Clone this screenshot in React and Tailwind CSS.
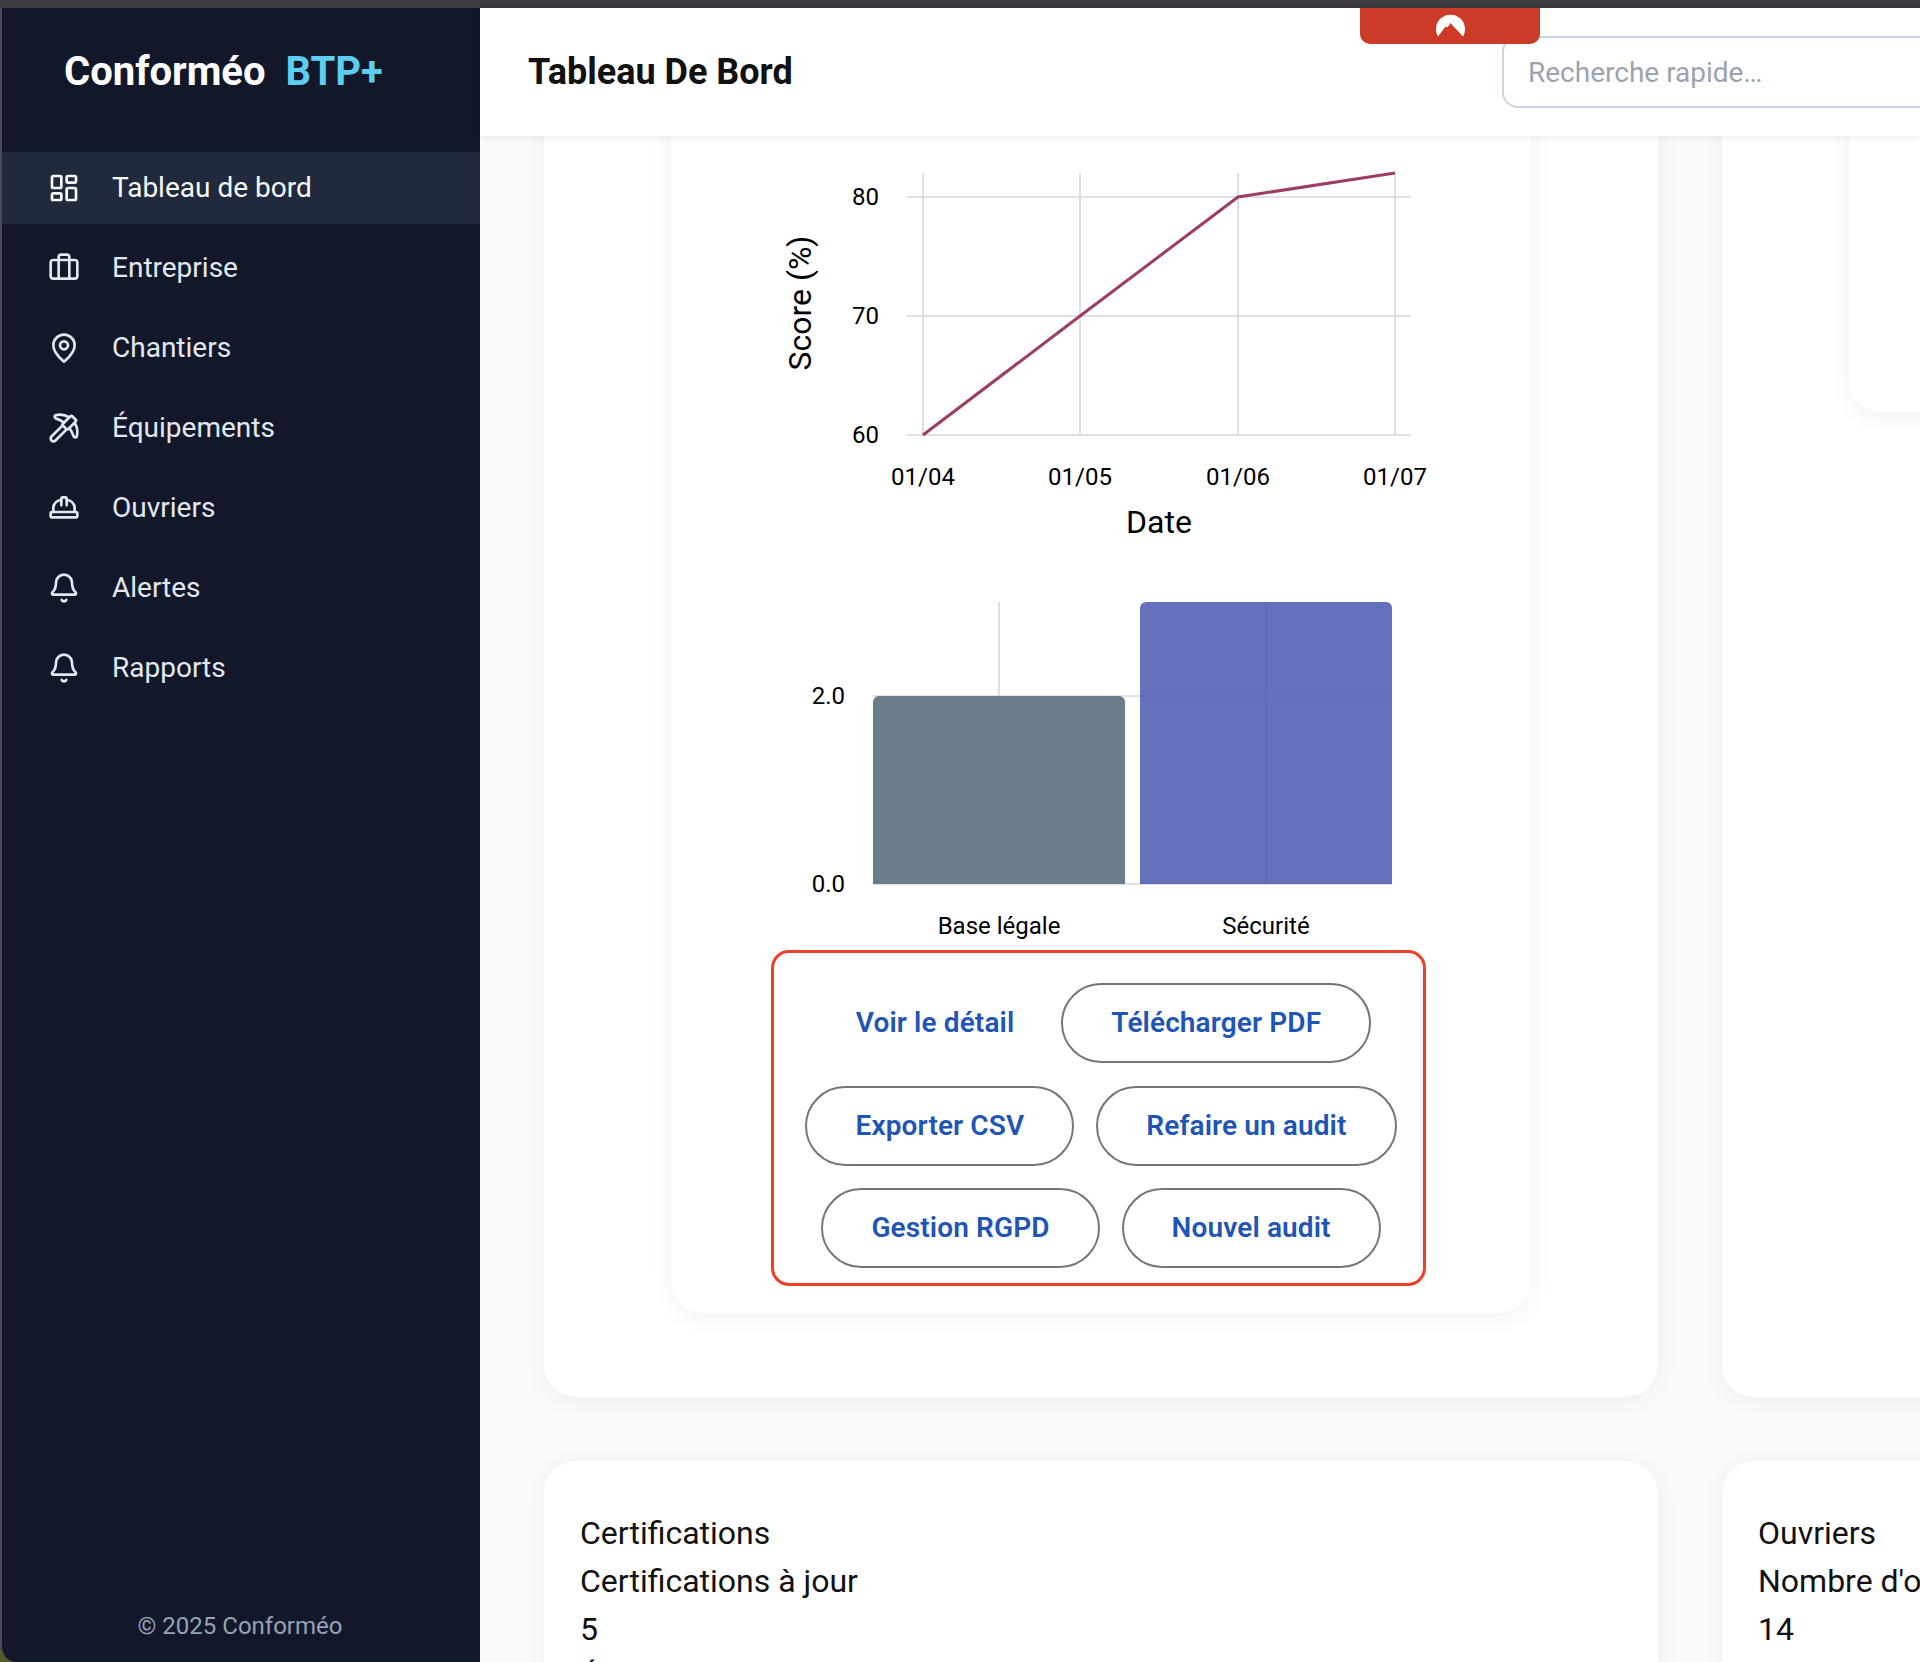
import React from "react";
import { LayoutDashboard, Briefcase, MapPin, Pickaxe, HardHat, Bell } from "lucide-react";

const nav = [
  { label: "Tableau de bord", Icon: LayoutDashboard, active: true },
  { label: "Entreprise", Icon: Briefcase },
  { label: "Chantiers", Icon: MapPin },
  { label: "Équipements", Icon: Pickaxe },
  { label: "Ouvriers", Icon: HardHat },
  { label: "Alertes", Icon: Bell },
  { label: "Rapports", Icon: Bell },
];

const actionRows = ["Télécharger PDF", "Exporter CSV", "Refaire un audit", "Gestion RGPD", "Nouvel audit"];

function Sidebar() {
  return (
    <aside className="w-[480px] shrink-0 h-full bg-[#121829] border-l-2 border-[#4b4b52] rounded-bl-[16px] flex flex-col">
      <div className="h-[144px] shrink-0 pl-[62px] pt-[41px] flex items-start gap-5 text-[40px] leading-[46px] font-bold">
        <span className="text-white">Conforméo</span>
        <span className="text-[#5ccff0]">BTP+</span>
      </div>
      <nav className="flex flex-col gap-2">
        {nav.map(({ label, Icon, active }) => (
          <a
            key={label}
            className={`h-[72px] flex items-center gap-8 pl-[46px] text-[28px] ${active ? "bg-[#202a3c] text-[#f8fafc]" : "text-[#e2e8f0]"}`}
          >
            <Icon size={32} strokeWidth={2} className="shrink-0" />
            <span>{label}</span>
          </a>
        ))}
      </nav>
      <div className="mt-auto pb-[18px] pr-[2px] text-center text-[24px] leading-[36px] text-[#94a3b8]">© 2025 Conforméo</div>
    </aside>
  );
}

function Header() {
  return (
    <header className="h-[128px] shrink-0 bg-white flex items-center justify-between overflow-hidden pl-12 shadow-[0_1px_8px_rgba(0,0,0,0.08)] relative z-10">
      <h1 className="text-[36px] font-bold text-[#111111]">Tableau De Bord</h1>
      <input
        readOnly
        placeholder="Recherche rapide…"
        className="w-[418px] h-[72px] border-2 border-r-0 border-[#cbd5e1] rounded-l-[16px] pl-6 text-[28px] outline-none placeholder:text-[#9ca3af]"
      />
    </header>
  );
}

function LineChart() {
  const vx = [252, 409, 567, 724];
  const hy = [61, 180, 299];
  return (
    <svg width="860" height="424" className="block">
      {vx.map((x) => (
        <line key={x} x1={x} x2={x} y1="37" y2="299" stroke="#e0e0e0" strokeWidth="2" />
      ))}
      {hy.map((y) => (
        <line key={y} x1="236" x2="740" y1={y} y2={y} stroke="#e0e0e0" strokeWidth="2" />
      ))}
      <polyline points="252,299 409,180 567,61 724,37" fill="none" stroke="#9c3d64" strokeWidth="3" />
      {[["80", 61], ["70", 180], ["60", 299]].map(([t, y]) => (
        <text key={t} x="208" y={y} textAnchor="end" dominantBaseline="central" fontSize="24" fill="#000">{t}</text>
      ))}
      {["01/04", "01/05", "01/06", "01/07"].map((t, i) => (
        <text key={t} x={vx[i]} y="341" textAnchor="middle" dominantBaseline="central" fontSize="24" fill="#000">{t}</text>
      ))}
      <text x="488" y="386" textAnchor="middle" dominantBaseline="central" fontSize="32" fill="#000">Date</text>
      <text x="129" y="167" textAnchor="middle" dominantBaseline="central" fontSize="32" fill="#000" transform="rotate(-90 129 167)">Score (%)</text>
    </svg>
  );
}

function BarChart() {
  return (
    <svg width="860" height="390" className="block">
      <line x1="202" x2="721" y1="136" y2="136" stroke="#e0e0e0" strokeWidth="2" />
      <line x1="202" x2="721" y1="324" y2="324" stroke="#e0e0e0" strokeWidth="2" />
      <line x1="328" x2="328" y1="42" y2="324" stroke="#e0e0e0" strokeWidth="2" />
      <line x1="595" x2="595" y1="42" y2="324" stroke="#e0e0e0" strokeWidth="2" />
      <path d="M202 324V142a6 6 0 0 1 6-6H448a6 6 0 0 1 6 6V324Z" fill="#6b7c8a" />
      <path d="M469 324V48a6 6 0 0 1 6-6H715a6 6 0 0 1 6 6V324Z" fill="#404dae" fillOpacity="0.8" />
      {[["2.0", 136], ["0.0", 324]].map(([t, y]) => (
        <text key={t} x="174" y={y} textAnchor="end" dominantBaseline="central" fontSize="24" fill="#000">{t}</text>
      ))}
      <text x="328" y="366" textAnchor="middle" dominantBaseline="central" fontSize="24" fill="#000">Base légale</text>
      <text x="595" y="366" textAnchor="middle" dominantBaseline="central" fontSize="24" fill="#000">Sécurité</text>
    </svg>
  );
}

function Actions() {
  return (
    <div className="ml-[100px] w-[655px] border-[3px] border-[#ee3f28] rounded-[18px] pt-[30px] pb-[14.5px] pl-[28px] pr-[23px] flex flex-wrap justify-center gap-x-[22px] gap-y-[22.5px]">
      <button className="h-[80px] px-[25px] text-[28px] font-semibold tracking-[0.12px] text-[#1f55b5]">Voir le détail</button>
      {actionRows.map((t) => (
        <button key={t} className="h-[80px] px-[48px] border-2 border-[#74767c] rounded-full text-[28px] font-semibold tracking-[0.12px] text-[#1f55b5] whitespace-nowrap">
          {t}
        </button>
      ))}
    </div>
  );
}

function InfoCard({ lines }) {
  return (
    <div className="w-[1114px] shrink-0 h-[400px] bg-white rounded-[32px] pt-12 pl-9 shadow-[0_4px_24px_rgba(15,23,42,0.05)] text-[32px] leading-[48px] text-[#111111]">
      {lines.map((l) => (
        <div key={l}>{l}</div>
      ))}
    </div>
  );
}

export default function App() {
  return (
    <div className="w-[1920px] h-[1662px] overflow-hidden bg-[#565a24] flex flex-col font-[Roboto,sans-serif]">
      <div className="h-2 shrink-0 bg-[#3b3b40]" />
      <div className="flex-1 min-h-0 flex relative">
        <Sidebar />
        <div className="flex-1 min-w-0 flex flex-col bg-[#f8fafc]">
          <Header />
          <main className="flex-1 min-h-0 overflow-hidden px-16">
            <div className="flex gap-16 -mt-[80px]">
              <section className="w-[1114px] shrink-0 bg-white rounded-[32px] pb-[84px] pt-[40px] shadow-[0_4px_24px_rgba(15,23,42,0.05)]">
                <div className="ml-[127px] w-[860px] bg-white rounded-[32px] pt-[40px] pb-[27px] shadow-[0_4px_24px_rgba(15,23,42,0.06)]">
                  <LineChart />
                  <BarChart />
                  <Actions />
                </div>
              </section>
              <section className="w-[1114px] shrink-0 bg-white rounded-[32px] pt-[40px] shadow-[0_4px_24px_rgba(15,23,42,0.05)]">
                <div className="ml-[127px] w-[860px] h-[316px] bg-white rounded-[32px] shadow-[0_4px_24px_rgba(15,23,42,0.06)]" />
              </section>
            </div>
            <div className="flex gap-16 mt-16">
              <InfoCard lines={["Certifications", "Certifications à jour", "5", "Échéances"]} />
              <InfoCard lines={["Ouvriers", "Nombre d'ouvriers", "14"]} />
            </div>
          </main>
        </div>
        <div className="absolute left-[1360px] top-0 w-[180px] h-[36px] bg-[#cc3a28] rounded-b-[10px] z-20 flex justify-center">
          <svg width="60" height="36" viewBox="0 0 60 36">
            <path d="M18 28.5A14.5 14.5 0 1 1 43 28.5L35.5 20.5L33.5 18.5L30.5 15L27.5 19.5L25.5 18.5Z" fill="#fff" />
          </svg>
        </div>
      </div>
    </div>
  );
}
